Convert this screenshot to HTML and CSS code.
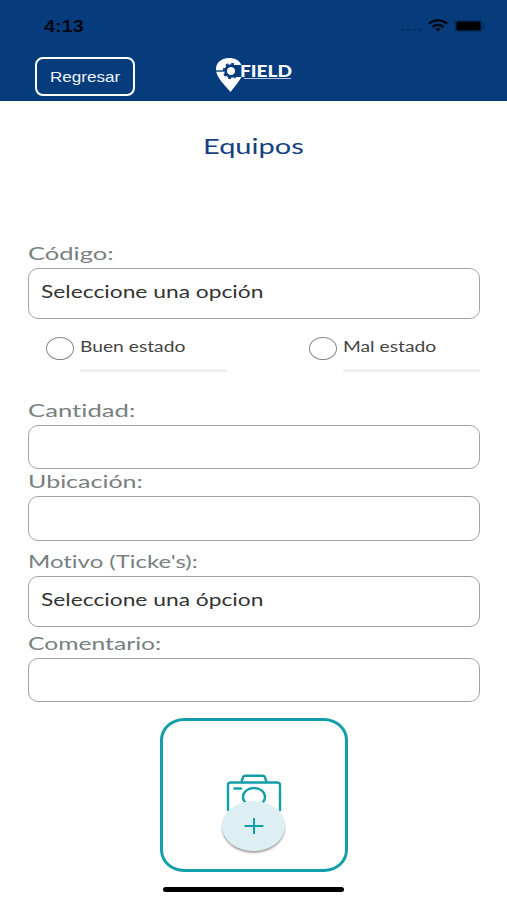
FILE: index.html
```html
<!DOCTYPE html>
<html lang="es">
<head>
    <meta charset="UTF-8">
    <meta name="viewport" content="width=device-width, initial-scale=1.0">
    <title>Equipos</title>
    <link rel="stylesheet" href="styles.css">
</head>
<body>

    <header class="header">
        <div class="status-bar">
            <span class="hora"><span class="texto">4:13</span></span>
            <svg class="status-icons" width="88" height="16" viewBox="0 0 88 16">
                <g fill="#052c5c">
                    <rect x="2" y="11" width="3" height="1.500"/>
                    <rect x="8" y="11" width="3" height="1.500"/>
                    <rect x="13.500" y="11" width="3" height="1.500"/>
                    <rect x="19" y="11" width="3" height="1.500"/>
                </g>
                <g fill="none" stroke="#000814" stroke-width="2.400">
                    <path d="M29.800 5.600Q39 -1 48.200 5.600"/>
                    <path d="M33.300 9Q39 4.400 44.700 9"/>
                </g>
                <path d="M36.300 11Q39 9 41.700 11L39 13.500Z" fill="#000814"/>
                <rect x="55.500" y="2" width="28" height="12" rx="3" fill="#052d5e"/>
                <rect x="57.500" y="3.700" width="24" height="8.600" rx="1" fill="#000"/>
                <rect x="84.500" y="6" width="1.500" height="4" rx=".7" fill="#052d5e"/>
            </svg>
        </div>
        <div class="nav-bar">
            <button type="button" class="btn-regresar"><span class="texto">Regresar</span></button>
            <div class="logo">
                <svg width="28" height="36" viewBox="0 0 28 36">
                    <path d="M15.500 35C11 29 1 21 1 12.500C1 5 7 1 14 1C20 1 24.500 3.500 26.500 8H19V20H26.500C23 26 19 30 15.500 35Z" fill="#fff"/>
                    <path d="M0 14H9" stroke="#063c7c" stroke-width="1.400"/>
                    <circle cx="16" cy="14" r="5.300" fill="#fff" stroke="#063c7c" stroke-width="3"/>
                    <circle cx="16" cy="14" r="7.200" fill="none" stroke="#063c7c" stroke-width="2" stroke-dasharray="2.800 2.850"/>
                    <circle cx="16" cy="14" r="3.800" fill="#fff"/>
                </svg>
                <div class="logo-nombre">
                    <span class="texto">FIELD</span>
                    <i class="logo-linea"></i>
                </div>
            </div>
        </div>
    </header>

    <main class="container">
        <h2><span class="texto">Equipos</span></h2>
        <form class="form">
            <label><span class="texto t-codigo">Código:</span></label>
            <div class="campo select"><span class="texto">Seleccione una opción</span></div>

            <div class="estados">
                <div class="estado">
                    <i class="radio"></i>
                    <div class="estado-nombre buen"><span class="texto">Buen estado</span></div>
                </div>
                <div class="estado">
                    <i class="radio"></i>
                    <div class="estado-nombre mal"><span class="texto">Mal estado</span></div>
                </div>
            </div>

            <label><span class="texto t-cantidad">Cantidad:</span></label>
            <div class="campo cantidad"></div>

            <label><span class="texto t-ubicacion">Ubicación:</span></label>
            <div class="campo ubicacion"></div>

            <label><span class="texto t-motivo">Motivo (Ticke's):</span></label>
            <div class="campo select motivo"><span class="texto">Seleccione una ópcion</span></div>

            <label><span class="texto t-comentario">Comentario:</span></label>
            <div class="campo comentario"></div>
        </form>

        <div class="foto">
            <svg class="camara" width="56" height="42" viewBox="0 0 56 42" fill="none" stroke="#129faa" stroke-width="2.400" stroke-linecap="round">
                <path d="M2 36V11Q2 8.500 5 8.500H51Q54 8.500 54 11V36"/>
                <path d="M15.500 8L17 3.500Q17.400 1.800 19.500 1.800H36.500Q38.600 1.800 39 3.500L40.500 8"/>
                <path d="M8.500 14.500H15"/>
                <ellipse cx="28" cy="23" rx="11" ry="9"/>
            </svg>
            <div class="agregar">
                <svg width="20" height="16" viewBox="0 0 20 16" stroke="#129faa" stroke-width="2">
                    <path d="M.5 8H19.500M10 0V16"/>
                </svg>
            </div>
        </div>
        <div class="home-bar"></div>
    </main>

</body>
</html>
```
FILE: styles.css
```css
* {
    box-sizing: border-box;
}
body {
    margin: 0;
    height: 900px;
    overflow: hidden;
    font-family: Lato, sans-serif;
    font-variant-ligatures: none;
    background: #fff;
}
.texto {
    display: inline-block;
    white-space: nowrap;
    transform-origin: left center;
}
.header {
    height: 101px;
    background: #063c7c;
}
.status-bar {
    display: flex;
    justify-content: space-between;
    height: 57px;
    padding: 18px 20px 0 44px;
}
.hora {
    font: bold 16px/17px "Liberation Sans", sans-serif;
    color: #000814;
}
.hora .texto {
    transform: scaleX(1.24);
}
.nav-bar {
    display: flex;
    padding-left: 35px;
}
.btn-regresar {
    width: 100px;
    height: 39px;
    padding: 0 0 0 13px;
    border: 2px solid #fff;
    border-radius: 8px;
    background: none;
    color: #eef3fa;
    font: 14px "Liberation Sans", sans-serif;
    text-align: left;
}
.btn-regresar .texto {
    transform: scaleX(1.22);
}
.logo {
    display: flex;
    margin-left: 80px;
}
.logo-nombre {
    display: flex;
    flex-direction: column;
    width: 52px;
    margin-left: -3px;
    padding-top: 6px;
    color: #fff;
    font: 900 16px/15px Lato, sans-serif;
}
.logo-nombre .texto {
    transform: scaleX(1.19);
}
.logo-linea {
    width: 47px;
    height: 1px;
    margin: 0 0 0 4px;
    background: #b4c7df;
}
.container {
    padding: 0 27px 0 28px;
}
h2 {
    height: 141px;
    margin: 0;
    padding: 32px 0 0 175px;
    font-size: 21px;
    font-weight: normal;
    line-height: 26px;
    color: #153f80;
}
h2 .texto {
    transform: scaleX(1.38);
}
label {
    display: block;
    height: 26px;
    font-size: 17px;
    line-height: 23px;
    color: #788080;
}
.t-codigo {
    transform: scaleX(1.5);
}
.t-cantidad {
    transform: scaleX(1.51);
}
.t-ubicacion {
    transform: scaleX(1.47);
}
.t-motivo {
    transform: scaleX(1.41);
}
.t-comentario {
    transform: scaleX(1.45);
}
.campo {
    height: 44px;
    border: 1.5px solid #a2a2a2;
    border-radius: 10px;
}
.select {
    height: 51px;
    padding: 11px 12px;
    font-size: 17px;
    line-height: 23px;
    color: #333;
}
.select .texto {
    transform: scaleX(1.34);
}
.estados {
    display: flex;
    justify-content: space-between;
    height: 80px;
    padding: 18px 0 0 18px;
}
.estado {
    display: flex;
    gap: 6px;
}
.radio {
    width: 28px;
    height: 23px;
    border: 1.5px solid #888;
    border-radius: 50%;
}
.estado-nombre {
    height: 35px;
    border-bottom: 3px solid #f1f1f1;
    font-size: 15.5px;
    line-height: 19px;
    color: #444;
}
.estado-nombre .texto {
    transform: scaleX(1.24);
}
.buen {
    width: 147px;
}
.mal {
    width: 137px;
}
.cantidad {
    margin-bottom: 1px;
}
.ubicacion {
    height: 45px;
    margin-bottom: 9px;
}
.motivo {
    margin-bottom: 5px;
}
.foto {
    position: relative;
    display: flex;
    justify-content: center;
    width: 188px;
    height: 154px;
    margin: 16px auto 0 132px;
    padding-top: 53px;
    border: 3px solid #129faa;
    border-radius: 24px / 22px;
}
.agregar {
    position: absolute;
    top: 80px;
    left: 59px;
    display: flex;
    justify-content: center;
    align-items: center;
    width: 63px;
    height: 50px;
    border-radius: 50%;
    background: #ddeff3;
    box-shadow: 0 2px 2px rgba(0, 0, 0, 0.35);
}
.home-bar {
    width: 181px;
    height: 5px;
    margin: 15px 0 0 135px;
    border-radius: 3px;
    background: #000;
}
```
